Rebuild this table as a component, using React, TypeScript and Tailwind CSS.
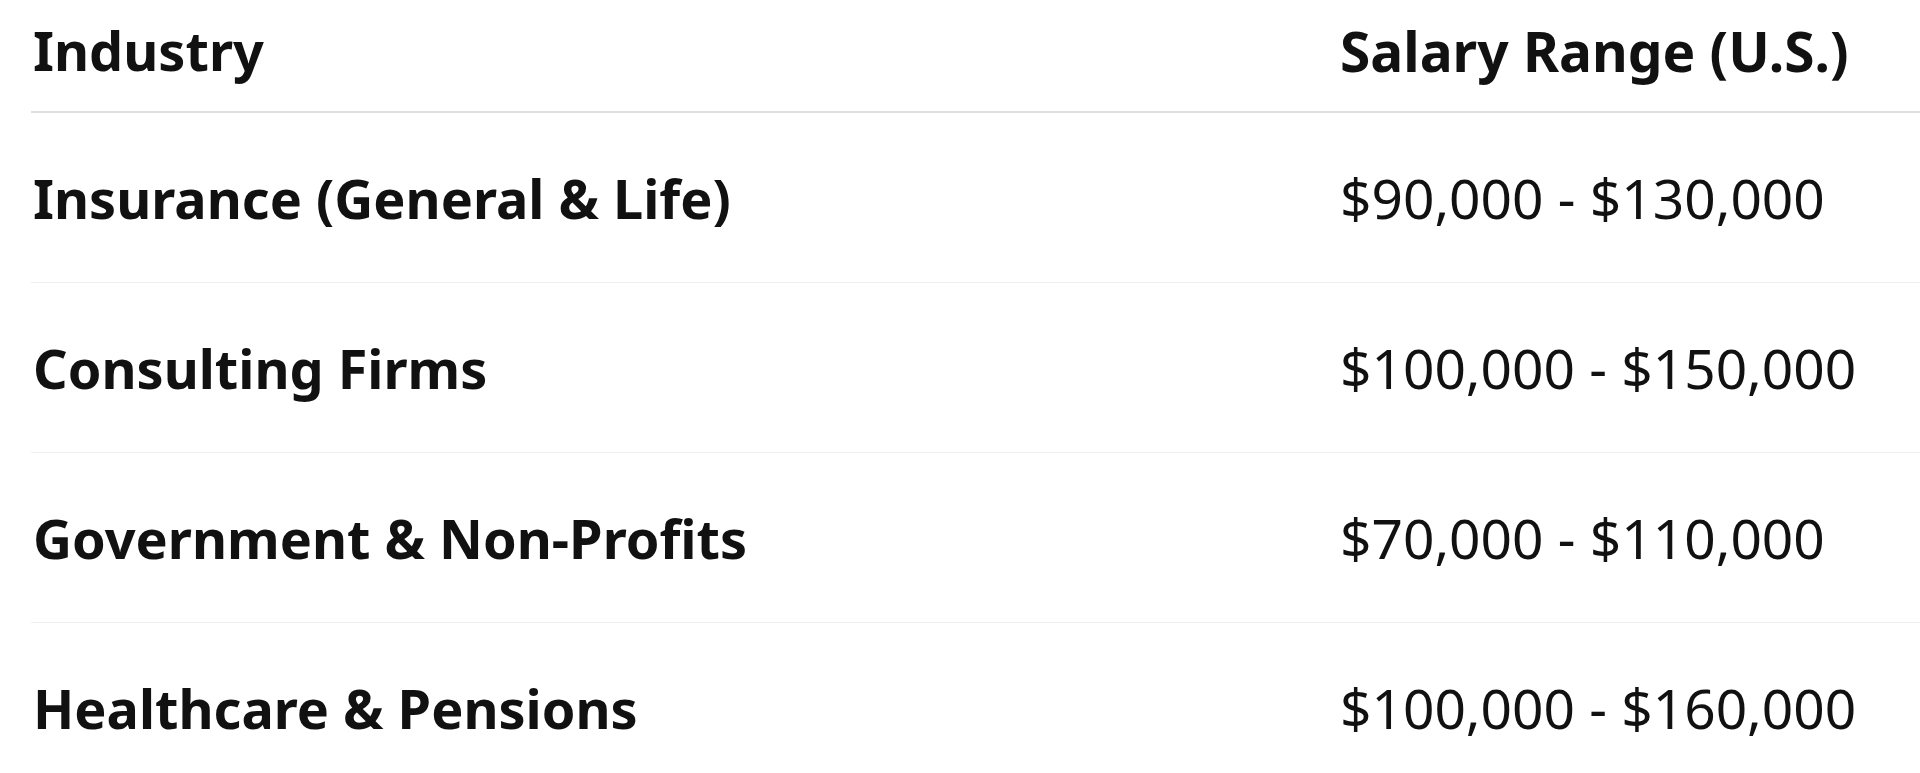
const rows = [
  { industry: "Insurance (General & Life)", salary: "$90,000 - $130,000" },
  { industry: "Consulting Firms", salary: "$100,000 - $150,000" },
  { industry: "Government & Non-Profits", salary: "$70,000 - $110,000" },
  { industry: "Healthcare & Pensions", salary: "$100,000 - $160,000" },
];

export default function App() {
  return (
    <div className="min-h-screen bg-white text-[#111] font-['Noto_Sans',sans-serif] overflow-hidden">
      <div className="ml-[31px] w-[2000px]">
        <div className="grid grid-cols-[1309px_1fr] h-[113px] border-b-2 border-[#dedede] text-[54px] font-bold leading-none pt-[23px]">
          <div className="pl-[2px]">Industry</div>
          <div className="text-[55px]">Salary Range (U.S.)</div>
        </div>
        {rows.map((row) => (
          <div
            key={row.industry}
            className="grid grid-cols-[1309px_1fr] items-center h-[170px] border-b border-[#efefef] text-[54px] leading-none"
          >
            <div className="pl-[2px] font-bold">{row.industry}</div>
            <div className="text-[55px]">{row.salary}</div>
          </div>
        ))}
      </div>
    </div>
  );
}
